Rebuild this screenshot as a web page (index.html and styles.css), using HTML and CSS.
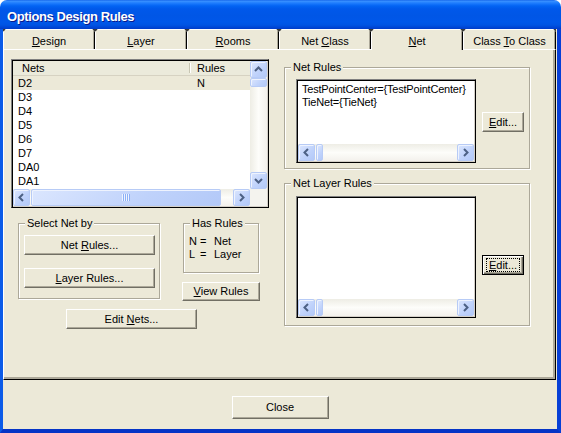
FILE: index.html
```html
<!DOCTYPE html>
<html>
<head>
<meta charset="utf-8">
<title>Options Design Rules</title>
<link rel="stylesheet" href="styles.css">
</head>
<body>
<div class="window">
  <div class="titlebar"><span class="title">Options Design Rules</span></div>
  <div class="client">
    <div class="tabs">
      <div class="tab"><u>D</u>esign</div>
      <div class="tab"><u>L</u>ayer</div>
      <div class="tab"><u>R</u>ooms</div>
      <div class="tab">Net <u>C</u>lass</div>
      <div class="tab active"><u>N</u>et</div>
      <div class="tab last">Class <u>T</u>o Class</div>
    </div>
    <div class="panel">
      <div class="col-left">
        <div class="listbox nets">
          <div class="lb-view">
            <div class="lv-header"><div class="hd hd-nets">Nets</div><div class="hd hd-rules">Rules</div></div>
            <div class="lv-row selected"><span class="c-net">D2</span><span class="c-rule">N</span></div>
            <div class="lv-row"><span class="c-net">D3</span></div>
            <div class="lv-row"><span class="c-net">D4</span></div>
            <div class="lv-row"><span class="c-net">D5</span></div>
            <div class="lv-row"><span class="c-net">D6</span></div>
            <div class="lv-row"><span class="c-net">D7</span></div>
            <div class="lv-row"><span class="c-net">DA0</span></div>
            <div class="lv-row"><span class="c-net">DA1</span></div>
          </div>
          <div class="vscroll">
            <div class="sb-btn"><svg width="15" height="15" viewBox="0 0 15 15"><polyline points="4,9 7.5,5.5 11,9" fill="none" stroke="#4d6185" stroke-width="2"/></svg></div>
            <div class="sb-track vtrack"><div class="sb-thumb vthumb"></div></div>
            <div class="sb-btn"><svg width="15" height="15" viewBox="0 0 15 15"><polyline points="4,6 7.5,9.5 11,6" fill="none" stroke="#4d6185" stroke-width="2"/></svg></div>
          </div>
          <div class="hscroll">
            <div class="sb-btn"><svg width="15" height="15" viewBox="0 0 15 15"><polyline points="9,4 5.5,7.5 9,11" fill="none" stroke="#4d6185" stroke-width="2"/></svg></div>
            <div class="sb-track"><div class="sb-thumb hthumb-wide"><span class="grip"></span></div></div>
            <div class="sb-btn"><svg width="15" height="15" viewBox="0 0 15 15"><polyline points="6,4 9.5,7.5 6,11" fill="none" stroke="#4d6185" stroke-width="2"/></svg></div>
          </div>
          <div class="sb-corner"></div>
        </div>

        <div class="left-groups">
          <fieldset class="group select-by">
            <legend>Select Net by</legend>
            <div class="group-body select-body">
              <button class="btn wide-btn"><span>Net <u>R</u>ules...</span></button>
              <button class="btn wide-btn"><span><u>L</u>ayer Rules...</span></button>
            </div>
          </fieldset>
          <div class="side">
            <fieldset class="group has-rules">
              <legend>Has Rules</legend>
              <div class="group-body keys">
                <div class="key"><span class="k">N</span><span class="eq">=</span><span>Net</span></div>
                <div class="key"><span class="k">L</span><span class="eq">=</span><span>Layer</span></div>
              </div>
            </fieldset>
            <button class="btn view-btn"><span><u>V</u>iew Rules</span></button>
          </div>
        </div>
        <button class="btn edit-nets"><span>Edit <u>N</u>ets...</span></button>
      </div>

      <div class="col-right">
        <fieldset class="group net-rules">
          <legend>Net Rules</legend>
          <div class="group-body rules-body">
            <div class="listbox rules-list short">
              <div class="rules-view">
                <div>TestPointCenter={TestPointCenter}</div>
                <div>TieNet={TieNet}</div>
              </div>
              <div class="hscroll">
                <div class="sb-btn"><svg width="15" height="15" viewBox="0 0 15 15"><polyline points="9,4 5.5,7.5 9,11" fill="none" stroke="#4d6185" stroke-width="2"/></svg></div>
                <div class="sb-track"><div class="sb-thumb hthumb-small"></div></div>
                <div class="sb-btn"><svg width="15" height="15" viewBox="0 0 15 15"><polyline points="6,4 9.5,7.5 6,11" fill="none" stroke="#4d6185" stroke-width="2"/></svg></div>
              </div>
            </div>
            <button class="btn edit-btn edit-top"><span><u>E</u>dit...</span></button>
          </div>
        </fieldset>
        <fieldset class="group layer-rules">
          <legend>Net Layer Rules</legend>
          <div class="group-body rules-body layer-body">
            <div class="listbox rules-list tall">
              <div class="rules-view"></div>
              <div class="hscroll">
                <div class="sb-btn"><svg width="15" height="15" viewBox="0 0 15 15"><polyline points="9,4 5.5,7.5 9,11" fill="none" stroke="#4d6185" stroke-width="2"/></svg></div>
                <div class="sb-track"><div class="sb-thumb hthumb-small"></div></div>
                <div class="sb-btn"><svg width="15" height="15" viewBox="0 0 15 15"><polyline points="6,4 9.5,7.5 6,11" fill="none" stroke="#4d6185" stroke-width="2"/></svg></div>
              </div>
            </div>
            <button class="btn edit-btn edit-bottom default"><span class="focus-rect"><span><u>E</u>dit...</span></span></button>
          </div>
        </fieldset>
      </div>
    </div>
    <div class="footer"><button class="btn close-btn"><span>Close</span></button></div>
  </div>
</div>
</body>
</html>
```

FILE: styles.css
```css
* { box-sizing: border-box; }
html, body { margin: 0; padding: 0; }
body {
  background: #ffffff;
  font-family: "Liberation Sans", Arial, sans-serif;
  font-size: 11px;
  color: #000;
}
u { text-decoration: underline; text-underline-offset: 1px; }

.window {
  width: 561px;
  height: 433px;
  display: flex;
  flex-direction: column;
}

/* ---------- title bar ---------- */
.titlebar {
  flex: none;
  height: 29px;
  border-radius: 7px 7px 0 0;
  padding: 9px 0 0 7px;
  background: linear-gradient(180deg,
    #0a5ae6 0, #3c93ff 1px, #2c87ff 2px, #1474fb 4px, #0263f3 6px,
    #0058ea 9px, #0056e6 16px, #0057e9 22px, #0054e3 25px, #0048d8 27px, #003bc8 29px);
}
.title {
  display: block;
  color: #fff;
  font-weight: bold;
  font-size: 13px;
  line-height: 15px;
  letter-spacing: -0.4px;
  white-space: nowrap;
  text-shadow: 1px 1px 0 #0a1a8a;
}

/* ---------- client / frame ---------- */
.client {
  flex: 1;
  display: flex;
  flex-direction: column;
  background: #ece9d8;
  border-left: 3px solid #0b5be8;
  border-right: 4px solid #073fd6;
  border-bottom: 4px solid #0534c6;
}

/* ---------- tabs ---------- */
.tabs {
  flex: none;
  display: flex;
  width: 553px;
  height: 20px;
  background: linear-gradient(#3a3a3a, #3a3a3a) 0 0 / 100% 3px no-repeat;
}
.tab {
  width: 92px;
  height: 20px;
  background: #ece9d8;
  border-top: 1px solid #fff;
  border-left: 1px solid #fff;
  border-right: 1px solid #000;
  box-shadow: inset -1px 0 0 #aca899;
  padding-top: 5px;
  line-height: 13px;
  text-align: center;
  white-space: nowrap;
  clip-path: polygon(3px 0, calc(100% - 3px) 0, 100% 3px, 100% 100%, 0 100%, 0 3px);
}
.tab.last { width: 93px; }
.tab.active {
  height: 21px;
  margin-bottom: -1px;
  position: relative;
  z-index: 1;
}

/* ---------- panel ---------- */
.panel {
  flex: none;
  width: 553px;
  height: 331px;
  border-top: 1px solid #fff;
  border-left: 1px solid #fff;
  border-right: 1px solid #000;
  border-bottom: 1px solid #000;
  box-shadow: inset -2px -2px 0 #aca899;
  display: flex;
  align-items: flex-start;
  padding: 9px 0 0 7px;
}
.col-left {
  width: 258px;
  display: flex;
  flex-direction: column;
  align-items: flex-start;
}
.col-right {
  width: 246px;
  margin-left: 15px;
  margin-top: 2px;
  display: flex;
  flex-direction: column;
}

/* ---------- list boxes ---------- */
.listbox {
  display: grid;
  background: #fff;
  border: 1px solid;
  border-color: #808080 #000 #000 #808080;
  padding: 1px;
  box-shadow: inset 1px 1px 0 #000, inset -1px -1px 0 #d4d0c8;
}
.nets {
  width: 258px;
  height: 149px;
  grid-template-columns: 1fr 17px;
  grid-template-rows: 1fr 17px;
}
.rules-list {
  width: 180px;
  grid-template-columns: 1fr;
  grid-template-rows: 1fr 17px;
}
.rules-list.short { height: 84px; }
.rules-list.tall { height: 122px; }

.lb-view { overflow: hidden; min-height: 0; background: #fff; }
.lv-header {
  display: flex;
  height: 15px;
  line-height: 14px;
  background: #ebeadb;
  border-bottom: 1px solid #d6d2c2;
}
.hd-nets { width: 177px; padding-left: 9px; position: relative; }
.hd-nets::after {
  content: "";
  position: absolute;
  right: 0;
  top: 2px;
  bottom: 2px;
  width: 1px;
  background: #c7c5b2;
  box-shadow: 1px 0 0 #fff;
}
.hd-rules { padding-left: 7px; }
.lv-row { display: flex; height: 14px; line-height: 14px; white-space: nowrap; }
.lv-row.selected { background: #ece9d8; }
.c-net { width: 177px; padding-left: 5px; }
.c-rule { padding-left: 7px; }

.rules-view {
  overflow: hidden;
  min-height: 0;
  padding: 2px 0 0 4px;
  line-height: 13px;
  white-space: nowrap;
  letter-spacing: -0.2px;
}

/* ---------- scrollbars ---------- */
.vscroll {
  display: flex;
  flex-direction: column;
  background: linear-gradient(90deg, #eeede5, #fdfdfa 50%, #f3f1ec);
}
.hscroll {
  display: flex;
  background: linear-gradient(#eeede5, #fdfdfa 50%, #f3f1ec);
}
.sb-track { flex: 1; display: flex; min-width: 0; min-height: 0; }
.vtrack { flex-direction: column; }
.sb-btn, .sb-thumb {
  border: 1px solid #b7cbf6;
  border-radius: 2px;
  background: linear-gradient(135deg, #dbe6fe, #bfd2fb 60%, #b3c9f8);
  box-shadow: inset 1px 1px 0 #eef3fe;
}
.sb-btn {
  flex: none;
  width: 17px;
  height: 17px;
  display: flex;
  align-items: center;
  justify-content: center;
}
.sb-btn svg { display: block; }
.vthumb { width: 17px; height: 9px; }
.hthumb-wide {
  width: 190px;
  margin-left: 1px;
  display: flex;
  align-items: center;
  justify-content: center;
}
.hthumb-small { width: 7px; margin-left: 1px; }
.grip {
  width: 8px;
  height: 7px;
  background: repeating-linear-gradient(90deg, #eef4fe 0 1px, #8cb0f8 1px 2px);
}
.sb-corner { background: #f4f3ee; }

/* ---------- group boxes ---------- */
.group {
  margin: 0;
  padding: 0;
  min-width: 0;
  border: 1px solid #aca899;
  box-shadow: 1px 1px 0 #fff, inset 1px 1px 0 #fff;
}
.group legend {
  margin-left: 6px;
  padding: 0 2px;
  line-height: 13px;
  background: #ece9d8;
}
.left-groups {
  display: flex;
  align-items: flex-start;
  margin-top: 9px;
}
.select-by { width: 142px; height: 82px; margin-left: 7px; }
.select-body {
  display: flex;
  flex-direction: column;
  gap: 13px;
  padding: 5px 4px 0 5px;
}
.side { display: flex; flex-direction: column; align-items: flex-start; margin-left: 22px; }
.has-rules { width: 76px; height: 56px; margin-left: 1px; }
.keys { padding: 5px 0 0 5px; line-height: 13px; }
.key { display: flex; }
.k { width: 11px; }
.eq { width: 14px; }

.net-rules { height: 108px; }
.layer-rules { height: 149px; margin-top: 8px; }
.rules-body { display: flex; align-items: flex-start; padding: 5px 0 0 11px; }
.layer-body { padding-top: 6px; }

/* ---------- buttons ---------- */
.btn {
  font: 11px/13px "Liberation Sans", Arial, sans-serif;
  color: #000;
  background: #ece9d8;
  border: 1px solid;
  border-color: #fff #716f64 #716f64 #fff;
  box-shadow: inset -1px -1px 0 #aca899;
  padding: 0;
  margin: 0;
  display: flex;
  align-items: center;
  justify-content: center;
  white-space: nowrap;
}
.btn span { white-space: pre; }
.wide-btn { width: 131px; height: 20px; }
.view-btn { width: 78px; height: 19px; margin-top: 9px; }
.edit-nets { width: 131px; height: 20px; margin-top: 8px; margin-left: 55px; }
.edit-btn { width: 42px; height: 20px; margin-left: 6px; }
.edit-top { margin-top: 33px; }
.edit-bottom { margin-top: 59px; }
.btn.default {
  border: 1px solid #000;
  box-shadow: inset 1px 1px 0 #fff, inset -1px -1px 0 #716f64, inset -2px -2px 0 #aca899;
}
.focus-rect {
  display: flex;
  align-items: center;
  justify-content: center;
  width: 34px;
  height: 14px;
  border: 1px dotted #000;
}

/* ---------- footer ---------- */
.footer {
  flex: 1;
  display: flex;
  justify-content: center;
  align-items: flex-start;
  padding-top: 16px;
}
.close-btn { width: 97px; height: 23px; }
```
